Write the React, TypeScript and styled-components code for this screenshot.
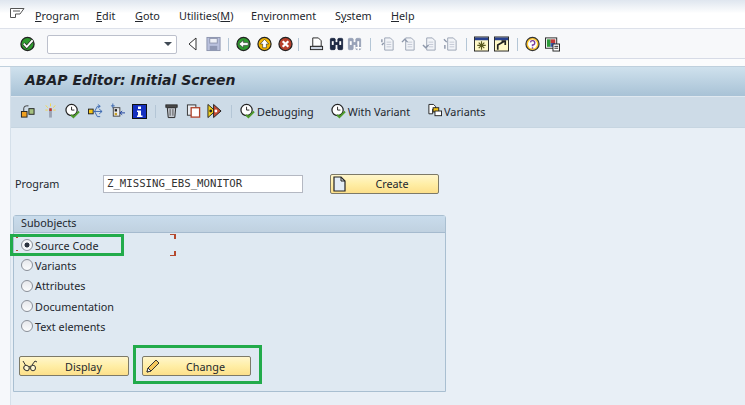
import React from "react";
import styled, { createGlobalStyle } from "styled-components";

const Global = createGlobalStyle`
  html, body { margin: 0; padding: 0; background: #fff; }
  #root { width: 745px; height: 405px; overflow: hidden; }
`;

const uiFont = `"Noto Sans", "DejaVu Sans", sans-serif`;

const Page = styled.div`
  position: relative;
  width: 745px;
  height: 405px;
  overflow: hidden;
  display: flex;
  flex-direction: column;
  font-family: ${uiFont};
  color: #23272e;
  background: #f6f8fb;
`;

const MenuBar = styled.div`
  height: 29px;
  box-sizing: border-box;
  padding: 3px 0 0 10px;
  display: flex;
  align-items: center;
  background: linear-gradient(#dfe6ef 0, #fbfcfd 12px, #fff 13px, #fff 100%);
  border-bottom: 1px solid #dde1ea;
`;

const MenuIcon = styled.svg`
  width: 15px;
  height: 12px;
  margin: -4px 10px 0 0;
  flex: none;
`;

const MenuItem = styled.span<{ $w: number }>`
  font-size: 10.8px;
  line-height: 16px;
  width: ${(p) => p.$w}px;
  flex: none;
  white-space: pre;
  u { text-underline-offset: 1px; text-decoration-thickness: 1px; }
`;

const Toolbar = styled.div`
  height: 29px;
  margin-top: 1px;
  box-sizing: border-box;
  padding-left: 20px;
  display: flex;
  align-items: center;
  background: #f7f8fa;
  border-bottom: 1px solid #d7dbe6;
`;

const Slot = styled.span<{ $w?: number; $m?: number }>`
  display: inline-flex;
  flex: none;
  width: ${(p) => p.$w ?? 15}px;
  height: 16px;
  margin-right: ${(p) => p.$m ?? 6}px;
  align-items: center;
  justify-content: center;
  svg { display: block; }
`;

const Sep = styled.span<{ $l: number; $r: number }>`
  flex: none;
  width: 1px;
  height: 13px;
  margin: 0 ${(p) => p.$r}px 0 ${(p) => p.$l}px;
  background: #b4c6d6;
`;

const Combo = styled.div`
  width: 130px;
  height: 19px;
  margin: 0 11px 0 12px;
  box-sizing: border-box;
  background: #fff;
  border: 1px solid #bcc0cc;
  border-radius: 2px;
  display: flex;
  align-items: center;
  justify-content: flex-end;
  padding-right: 4px;
  &::after {
    content: "";
    border-left: 4px solid transparent;
    border-right: 4px solid transparent;
    border-top: 4px solid #404a55;
  }
`;

const Gap = styled.div`
  height: 7px;
  flex: none;
  background: #fbfcfd;
  border-bottom: 1px solid #bfd0dd;
`;

const Screen = styled.div`
  flex: 1;
  margin-left: 10px;
  display: flex;
  flex-direction: column;
  background: #e8eff6;
  border-left: 1px solid #d5e0ea;
`;

const Title = styled.div`
  height: 29px;
  box-sizing: border-box;
  padding: 0 0 3px 14px;
  display: flex;
  align-items: center;
  font-family: "DejaVu Sans", sans-serif;
  font-weight: 700;
  font-style: italic;
  font-size: 14px;
  color: #1d2127;
  background: linear-gradient(#cfe1ed, #a8c2d6);
`;

const AppBar = styled.div`
  height: 32px;
  box-sizing: border-box;
  padding: 0 0 2px 9px;
  display: flex;
  align-items: center;
  background: #cddbe7;
  border-top: 1px solid #dfe8f0;
  border-bottom: 1px solid #c6d5e1;
`;

const ToolLabel = styled.span<{ $m: number }>`
  font-size: 10.8px;
  margin: 0 ${(p) => p.$m}px 0 2px;
  white-space: pre;
`;

const Body = styled.div`
  flex: 1;
  padding: 45px 0 0 2px;
  display: flex;
  flex-direction: column;
`;

const ProgramRow = styled.div`
  display: flex;
  align-items: center;
  height: 21px;
`;

const FieldLabel = styled.span`
  width: 90px;
  padding-left: 2px;
  box-sizing: border-box;
  font-size: 10.8px;
`;

const Field = styled.div`
  width: 200px;
  height: 18px;
  box-sizing: border-box;
  margin-right: 27px;
  padding-left: 3px;
  background: #fff;
  border: 1px solid #b4b8c2;
  font-family: "DejaVu Sans Mono", monospace;
  font-size: 10.7px;
  line-height: 16px;
  color: #333;
`;

const Btn = styled.div<{ $w: number }>`
  width: ${(p) => p.$w}px;
  height: 20px;
  flex: none;
  box-sizing: border-box;
  padding-left: 2px;
  display: flex;
  align-items: center;
  font-size: 10.8px;
  border: 1px solid #7d7a68;
  border-radius: 2px;
  background: linear-gradient(#fff6cc, #ffeea6 50%, #fde08a);
  span { flex: 1; text-align: center; }
`;

const Panel = styled.section`
  width: 433px;
  height: 177px;
  margin-top: 21px;
  box-sizing: border-box;
  display: flex;
  flex-direction: column;
  background: #dfe9f2;
  border: 1px solid #a9bfd1;
  border-radius: 3px 3px 0 0;
`;

const PanelHead = styled.div`
  height: 17px;
  flex: none;
  box-sizing: border-box;
  padding-left: 7px;
  font-size: 10.8px;
  line-height: 14px;
  background: linear-gradient(#c9dcec, #c0d1e0);
  border-bottom: 1px solid #a5bace;
`;

const Radios = styled.div`
  padding: 2px 0 0 7px;
  display: flex;
  flex-direction: column;
`;

const RadioRow = styled.div`
  height: 20.3px;
  display: flex;
  align-items: center;
  font-size: 10.8px;
  white-space: pre;
`;

const RadioDot = styled.span<{ $on?: boolean }>`
  width: 12px;
  height: 12px;
  margin-right: 2px;
  flex: none;
  box-sizing: border-box;
  border-radius: 50%;
  border: 1px solid #8a8f98;
  background: ${(p) =>
    p.$on
      ? "radial-gradient(circle, #2c3440 0 2.2px, #f5f7fa 2.8px)"
      : "linear-gradient(#e6e8ec, #fbfcfd)"};
`;

const Actions = styled.div`
  margin-top: 20px;
  padding-left: 5px;
  display: flex;
  gap: 13px;
`;

const GreenBox = styled.div<{ $x: number; $y: number; $w: number; $h: number }>`
  position: absolute;
  left: ${(p) => p.$x}px;
  top: ${(p) => p.$y}px;
  width: ${(p) => p.$w}px;
  height: ${(p) => p.$h}px;
  box-sizing: border-box;
  border: 3px solid #22ab4b;
`;

const Corner = styled.div<{ $x: number; $y: number; $top?: boolean; $size?: number }>`
  position: absolute;
  left: ${(p) => p.$x}px;
  top: ${(p) => p.$y}px;
  width: ${(p) => p.$size ?? 4}px;
  height: ${(p) => p.$size ?? 4}px;
  border-color: #b5492e;
  border-style: solid;
  border-width: ${(p) => (p.$top ? "1px" : "0")} 2px ${(p) => (p.$top ? "0" : "1px")} 0;
`;

const S = (p: { children: React.ReactNode; w?: number; h?: number }) => (
  <svg width={p.w ?? 16} height={p.h ?? 16} viewBox="0 0 16 16">{p.children}</svg>
);

const Enter = () => (
  <S>
    <circle cx="8" cy="8" r="7" fill="#2f9a2f" stroke="#222" strokeWidth="1.4" />
    <path d="M4 7.500 7.200 11 13.500 4" fill="none" stroke="#222" strokeWidth="3.400" />
    <path d="M4 7.500 7.200 11 13.500 4" fill="none" stroke="#fff" strokeWidth="2" />
  </S>
);
const Back = () => (
  <svg width="9" height="14" viewBox="0 0 9 14"><path d="M8 1 1 7l7 6z" fill="#fff" stroke="#333" /></svg>
);
const Save = () => (
  <S>
    <rect x="1" y="1" width="14" height="14" fill="#b9c0dd" stroke="#8c93ad" />
    <rect x="4" y="2" width="8" height="5" fill="#eef0f6" stroke="#8c93ad" />
    <rect x="4" y="10" width="8" height="5" fill="#8f97b4" />
  </S>
);
const RoundNav = (p: { fill: string; kind: "back" | "up" | "x" }) => (
  <S>
    <circle cx="8" cy="8" r="7" fill={p.fill} stroke="#222" strokeWidth="1.3" />
    {p.kind === "back" && <path d="M3 8l5-4v2.500h5v3H8V12z" fill="#fff" stroke="#222" strokeWidth=".6" />}
    {p.kind === "up" && <path d="M8 3l4.500 5H10v4H6V8H3.500z" fill="#fff" stroke="#222" strokeWidth=".6" />}
    {p.kind === "x" && <path d="M5 5l6 6M11 5l-6 6" stroke="#fff" strokeWidth="2.400" />}
  </S>
);
const Printer = () => (
  <S>
    <path d="M4 1.500h6l3 3v6H4z" fill="#fff" stroke="#222" />
    <rect x="1.500" y="10.500" width="13" height="3.500" fill="#cfd6e2" stroke="#222" />
  </S>
);
const Binoc = (p: { c: string; plus?: boolean }) => (
  <S>
    <rect x="1.500" y="2" width="5" height="12" rx="1" fill={p.c} stroke={p.c} />
    <rect x="9.500" y="2" width="5" height="12" rx="1" fill={p.c} stroke={p.c} />
    <rect x="6" y="6" width="4" height="3" fill={p.c} />
    <rect x="3" y="5" width="2" height="4" fill="#fff" />
    <rect x="11" y="5" width="2" height="4" fill="#fff" />
    {p.plus && <path d="M12 9v6M9 12h6" stroke="#fff" strokeWidth="1.500" />}
  </S>
);
const PageNav = (p: { d: string }) => (
  <S>
    <path d="M5 1.500h6l3 3v10H5z" fill="#f2f4f8" stroke="#9aa3b3" />
    <path d="M7 6h5M7 8.500h5M7 11h5" stroke="#c2c8d3" />
    <path d={p.d} fill="none" stroke="#8d97aa" strokeWidth="1.500" />
  </S>
);
const Win = (p: { kind: "new" | "short" }) => (
  <S>
    <rect x=".5" y=".5" width="15" height="15" fill="#fff8c8" stroke="#222" />
    <rect x="1" y="1" width="14" height="3" fill="#27408f" />
    {p.kind === "new" ? (
      <path d="M8 5v9M3.500 9.500h9M5 6.500l6 6M11 6.500l-6 6" stroke="#5a5a20" strokeWidth="1.200" />
    ) : (
      <path d="M4 14V9l7-4M8 5h4v4" fill="none" stroke="#222" strokeWidth="1.800" />
    )}
  </S>
);
const Help = () => (
  <S>
    <circle cx="8" cy="8" r="7" fill="#ffc830" stroke="#333" strokeWidth="1.300" />
    <circle cx="8" cy="8" r="4.800" fill="#fff" />
    <path d="M5.800 6.300A2.300 2.300 0 1 1 8 9v1.500M8 11.500v1.500" fill="none" stroke="#7a3fa0" strokeWidth="1.500" />
  </S>
);
const Layout = () => (
  <S>
    <rect x=".5" y="1.500" width="12" height="11" fill="#fff" stroke="#222" />
    <rect x="2" y="3" width="4" height="8" fill="#2d9a3a" />
    <rect x="6" y="3" width="5" height="4" fill="#c03a3a" />
    <rect x="6" y="7" width="5" height="4" fill="#3a52b0" />
    <rect x="8.500" y="8" width="7" height="7.500" fill="#fff" stroke="#222" />
    <path d="M10 10.500h4M10 12.500h4" stroke="#222" />
  </S>
);
const Sep2 = (p: { l: number; r: number }) => <Sep $l={p.l} $r={p.r} />;

const Objects = () => (
  <S>
    <path d="M4 8V5q0-2.500 3-2.500h2" fill="none" stroke="#333" />
    <rect x="1.500" y="8.500" width="6" height="6" fill="#f0a020" stroke="#222" />
    <rect x="9.500" y="5.500" width="5.500" height="6" fill="#a5c080" stroke="#222" />
  </S>
);
const Wand = () => (
  <S>
    <path d="M8 6v9" stroke="#9aa3b3" strokeWidth="3" />
    <rect x="6.700" y="5" width="2.600" height="3" fill="#c0392b" />
    <path d="M8 0v3M3 2l2 2.500M13 2l-2 2.500M2.500 7h2.500M11 7h2.500" stroke="#f2d64a" />
  </S>
);
const Clock = () => (
  <S>
    <circle cx="7" cy="7" r="6" fill="#fff" stroke="#222" strokeWidth="1.300" />
    <path d="M7 3.500V7h3" fill="none" stroke="#222" />
    <path d="M6.500 12l2.500 2.500L15 8.500" fill="none" stroke="#4d9a2a" strokeWidth="2" />
  </S>
);
const Arrows = () => (
  <S>
    <rect x=".5" y="6" width="5" height="5" fill="#f5c518" stroke="#222" />
    <path d="M5.500 8.500h9.500M12 6l3 2.500-3 2.500M7 8.500 10 3l3 0M10.500 1l2.500 2-2.500 2M7 8.500l3 5.500h3" fill="none" stroke="#3a66b0" />
  </S>
);
const Where = () => (
  <S>
    <path d="M3 0v5M1 2.500h4" stroke="#3a66b0" />
    <rect x="3.500" y="4.500" width="7" height="9" fill="#e8eaee" stroke="#444" />
    <rect x="5" y="6" width="2.500" height="2.500" fill="#222" />
    <rect x="5" y="10" width="2.500" height="2.500" fill="#c9a227" />
    <path d="M16 10h-5M13 8l-2.500 2 2.500 2" fill="none" stroke="#1d3f9c" />
  </S>
);
const Info = () => (
  <svg width="15" height="15" viewBox="0 0 15 15">
    <rect x=".5" y=".5" width="14" height="14" fill="#1530c0" stroke="#111" />
    <rect x="6" y="2.500" width="3" height="2.500" fill="#fff" />
    <path d="M5 6.500h4v5h1.500V13h-5.500v-1.500H6V8H5z" fill="#fff" />
  </svg>
);
const Trash = () => (
  <S>
    <rect x="2" y="1.500" width="12" height="2.500" fill="#555" stroke="#222" />
    <path d="M3.500 4.500h9L11.500 15h-7z" fill="#c4c8cf" stroke="#222" />
    <path d="M6.500 6v7M9.500 6v7" stroke="#555" />
  </S>
);
const Copy = () => (
  <S>
    <rect x="1.500" y="1.500" width="9" height="11" fill="#e9ecf1" stroke="#333" />
    <rect x="5.500" y="4.500" width="9" height="10" fill="#fff" stroke="#b0432c" strokeWidth="1.400" />
  </S>
);
const Rename = () => (
  <svg width="16" height="16" viewBox="0 0 16 16">
    <path d="M1 1l8 7-8 7z" fill="#f2d21e" stroke="#222" />
    <path d="M7 1l8 7-8 7z" fill="#c64a32" stroke="#222" />
    <circle cx="4" cy="8" r="1.500" fill="#222" />
    <circle cx="9.500" cy="8" r="1.500" fill="#fff" />
  </svg>
);
const Variants = () => (
  <S>
    <path d="M2 1h5l2 2v3H6v5H2z" fill="#fff" stroke="#222" />
    <rect x="6.500" y="4.500" width="6" height="4.500" fill="#f5c518" stroke="#222" />
    <rect x="8.500" y="8" width="7" height="5" fill="#fff" stroke="#222" />
  </S>
);
const Doc = () => (
  <svg width="13" height="16" viewBox="0 0 13 16">
    <path d="M1 1h7l4 4v10H1z" fill="#e3edf6" stroke="#222" strokeWidth="1.200" />
    <path d="M8 1v4h4" fill="none" stroke="#222" />
  </svg>
);
const Glasses = () => (
  <svg width="17" height="14" viewBox="0 0 17 14">
    <path d="M1 2l3 5M7 8l2-1M10 6l3-4 2 1" fill="none" stroke="#333" />
    <ellipse cx="4.500" cy="9" rx="2.800" ry="2.500" fill="#fff8d0" stroke="#333" transform="rotate(30 4.500 9)" />
    <ellipse cx="11" cy="9" rx="2.500" ry="2.800" fill="#fff8d0" stroke="#333" />
  </svg>
);
const Pencil = () => (
  <svg width="16" height="16" viewBox="0 0 16 16">
    <path d="M2 14l1-4 8-8 3 3-8 8z" fill="#f6c75a" stroke="#333" />
    <path d="M2 14l1-4 3 3z" fill="#fff" stroke="#333" />
  </svg>
);

export default function App() {
  return (
    <Page>
      <Global />
      <MenuBar>
        <MenuIcon viewBox="0 0 15 12">
          <path d="M.5.5h13.500L10 6H5.500v3.500H.5z" fill="#fff" stroke="#555" />
          <path d="M3 3h7" stroke="#555" />
        </MenuIcon>
        <MenuItem $w={61}><u>P</u>rogram</MenuItem>
        <MenuItem $w={39}><u>E</u>dit</MenuItem>
        <MenuItem $w={44}><u>G</u>oto</MenuItem>
        <MenuItem $w={72}>Utilities(<u>M</u>)</MenuItem>
        <MenuItem $w={84}>En<u>v</u>ironment</MenuItem>
        <MenuItem $w={56}>S<u>y</u>stem</MenuItem>
        <MenuItem $w={30}><u>H</u>elp</MenuItem>
      </MenuBar>
      <Toolbar>
        <Slot $m={0}><Enter /></Slot>
        <Combo />
        <Slot $w={9} $m={9}><Back /></Slot>
        <Slot $m={0}><Save /></Slot>
        <Sep2 l={7} r={7} />
        <Slot><RoundNav fill="#2f9a2f" kind="back" /></Slot>
        <Slot><RoundNav fill="#f2b400" kind="up" /></Slot>
        <Slot $m={0}><RoundNav fill="#b8402c" kind="x" /></Slot>
        <Sep2 l={5} r={10} />
        <Slot $m={5}><Printer /></Slot>
        <Slot $m={3}><Binoc c="#1e2a44" /></Slot>
        <Slot $m={0}><Binoc c="#98a2b8" plus /></Slot>
        <Sep2 l={8} r={9} />
        <Slot><PageNav d="M2 3v3M2 9l2-2" /></Slot>
        <Slot><PageNav d="M1 6l3-3 3 3" /></Slot>
        <Slot><PageNav d="M1 9l3 3 3-3" /></Slot>
        <Slot $m={0}><PageNav d="M2 9v4M1 3l3 3" /></Slot>
        <Sep2 l={8} r={7} />
        <Slot $m={5}><Win kind="new" /></Slot>
        <Slot $m={0}><Win kind="short" /></Slot>
        <Sep2 l={8} r={7} />
        <Slot $m={5}><Help /></Slot>
        <Slot $m={0}><Layout /></Slot>
      </Toolbar>
      <Gap />
      <Screen>
        <Title>ABAP Editor: Initial Screen</Title>
        <AppBar>
          <Slot $m={8}><Objects /></Slot>
          <Slot $m={7}><Wand /></Slot>
          <Slot $m={8}><Clock /></Slot>
          <Slot $m={7}><Arrows /></Slot>
          <Slot $m={7}><Where /></Slot>
          <Slot $m={0}><Info /></Slot>
          <Sep2 l={8} r={8} />
          <Slot $m={7}><Trash /></Slot>
          <Slot $m={6}><Copy /></Slot>
          <Slot $m={0}><Rename /></Slot>
          <Sep2 l={9} r={8} />
          <Slot $m={0}><Clock /></Slot>
          <ToolLabel $m={17}>Debugging</ToolLabel>
          <Slot $m={0}><Clock /></Slot>
          <ToolLabel $m={17}>With Variant</ToolLabel>
          <Slot $m={0}><Variants /></Slot>
          <ToolLabel $m={0}>Variants</ToolLabel>
        </AppBar>
        <Body>
          <ProgramRow>
            <FieldLabel>Program</FieldLabel>
            <Field>Z_MISSING_EBS_MONITOR</Field>
            <Btn $w={109}><Doc /><span>Create</span></Btn>
          </ProgramRow>
          <Panel>
            <PanelHead>Subobjects</PanelHead>
            <Radios>
              <RadioRow><RadioDot $on />Source Code</RadioRow>
              <RadioRow><RadioDot />Variants</RadioRow>
              <RadioRow><RadioDot />Attributes</RadioRow>
              <RadioRow><RadioDot />Documentation</RadioRow>
              <RadioRow><RadioDot />Text elements</RadioRow>
            </Radios>
            <Actions>
              <Btn $w={110}><Glasses /><span>Display</span></Btn>
              <Btn $w={109}><Pencil /><span>Change</span></Btn>
            </Actions>
          </Panel>
        </Body>
      </Screen>
      <Corner $x={170} $y={234} $top />
      <Corner $x={170} $y={251} />
      <Corner $x={16} $y={237} $size={0} $top />
      <Corner $x={16} $y={250} $size={0} $top />
      <GreenBox $x={10} $y={234} $w={114} $h={22} />
      <GreenBox $x={133} $y={345} $w={129} $h={39} />
    </Page>
  );
}
